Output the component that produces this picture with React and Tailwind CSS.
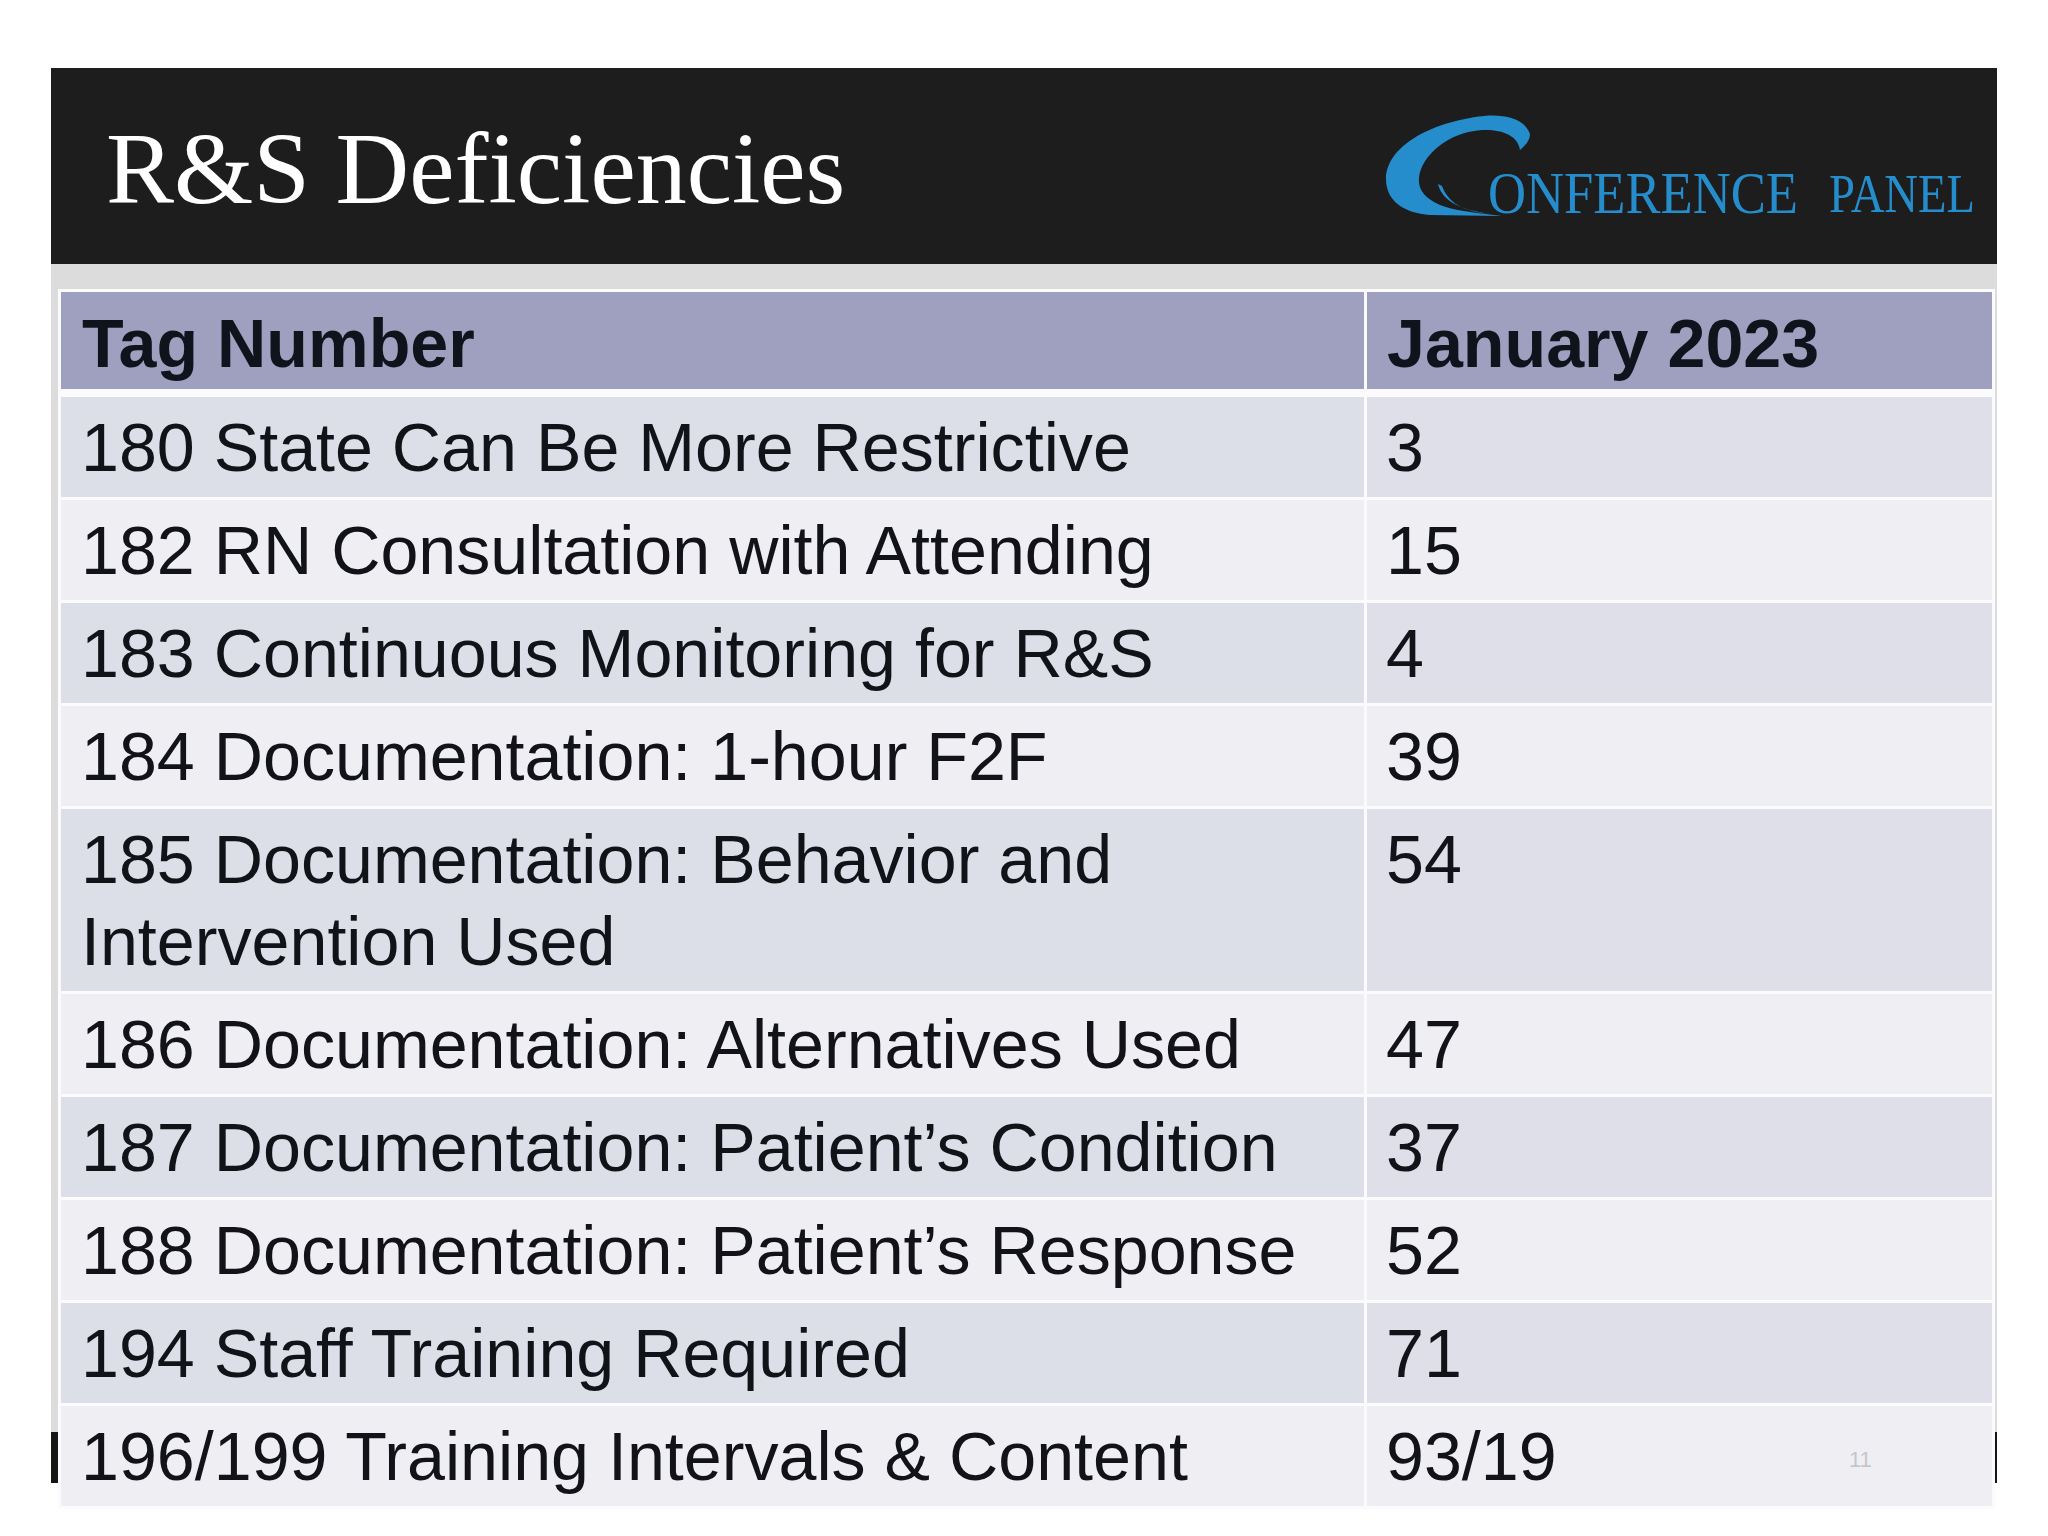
import React from "react";

const rows = [
  { tag: "180 State Can Be More Restrictive", val: "3" },
  { tag: "182 RN Consultation with Attending", val: "15" },
  { tag: "183 Continuous Monitoring for R&S", val: "4" },
  { tag: "184 Documentation: 1-hour F2F", val: "39" },
  { tag: ["185 Documentation: Behavior and", "Intervention Used"], val: "54" },
  { tag: "186 Documentation: Alternatives Used", val: "47" },
  { tag: "187 Documentation: Patient\u2019s Condition", val: "37" },
  { tag: "188 Documentation: Patient\u2019s Response", val: "52" },
  { tag: "194 Staff Training Required", val: "71" },
  { tag: "196/199 Training Intervals & Content", val: "93/19" },
];

function Logo() {
  return (
    <svg width="600" height="130" viewBox="0 0 600 130" className="block">
      <path
        d="M150 34 C145 19 125 14 104 16 C48 22 6 48 6 79 C6 101 24 113 50 115 L122 116 C95 113 72 110 60 105 C44 98 38 89 39 78 C41 56 68 32 102 30 C121 29 138 35 140 50 C146 45 150 40 150 34 Z"
        fill="#268dcd"
      />
      <path
        d="M58 84 C62 100 78 110 112 114 C82 112 68 102 62 86 Z"
        fill="#268dcd"
      />
      <text
        x="108"
        y="113"
        fill="#268dcd"
        fontFamily="'Liberation Serif', serif"
        fontSize="59"
        textLength="310"
        lengthAdjust="spacingAndGlyphs"
      >
        ONFERENCE
      </text>
      <text
        x="449"
        y="112"
        fill="#268dcd"
        fontFamily="'Liberation Serif', serif"
        fontSize="55"
        textLength="146"
        lengthAdjust="spacingAndGlyphs"
      >
        PANEL
      </text>
    </svg>
  );
}

export default function App() {
  return (
    <div className="relative w-[2048px] h-[1536px] bg-white overflow-hidden">
      <div className="ml-[51px] mt-[68px] w-[1946px] flex flex-col">
        {/* Header */}
        <div className="h-[196px] bg-[#1d1d1d] flex justify-between items-start pl-[55px] pr-[17px]">
          <div
            className="pt-[50px] text-white text-[102px] leading-none"
            style={{ fontFamily: "'Liberation Serif', 'Times New Roman', serif" }}
          >
            R&amp;S Deficiencies
          </div>
          <div className="pt-[32px]">
            <Logo />
          </div>
        </div>
        {/* Body */}
        <div className="h-[1168px] bg-[#dcdcdd] pt-[25px] pl-[7px]">
          <div
            className="relative z-10 w-[1937px] bg-[#fbfbfd] p-[3px] flex flex-col gap-[3px] text-[68.2px] leading-[82px] text-[#121319]"
            style={{ fontFamily: "'Liberation Sans', Arial, sans-serif" }}
          >
            <div className="grid grid-cols-[1303px_625px] gap-x-[3px] mb-[5px] font-bold text-[#10121c]">
              <div className="bg-[#9fa0bf] h-[97px] pt-[10px] pl-[21px]">Tag Number</div>
              <div className="bg-[#9fa0bf] h-[97px] pt-[10px] pl-[20px]">January 2023</div>
            </div>
            {rows.map((r, i) => {
              const odd = i % 2 === 0;
              const double = Array.isArray(r.tag);
              return (
                <div key={i} className="grid grid-cols-[1303px_625px] gap-x-[3px]">
                  <div
                    className={
                      (odd ? "bg-[#dcdfe8] " : "bg-[#eeeef3] ") +
                      (double ? "h-[182px] " : "h-[100px] ") +
                      "pt-[9px] pl-[20px] whitespace-nowrap"
                    }
                  >
                    {double ? (
                      <>
                        {r.tag[0]}
                        <br />
                        {r.tag[1]}
                      </>
                    ) : (
                      r.tag
                    )}
                  </div>
                  <div
                    className={
                      (odd ? "bg-[#dfdfe9] " : "bg-[#eeeef3] ") +
                      (double ? "h-[182px] " : "h-[100px] ") +
                      "pt-[9px] pl-[19px]"
                    }
                  >
                    {r.val}
                  </div>
                </div>
              );
            })}
          </div>
        </div>
        {/* Footer bar */}
        <div className="h-[51px] bg-[#151515]"></div>
      </div>
      <div
        className="absolute left-[1849px] top-[1449px] text-[22px] leading-none text-[#c6c6cc] z-20"
        style={{ fontFamily: "'Liberation Sans', Arial, sans-serif" }}
      >
        11
      </div>
    </div>
  );
}
